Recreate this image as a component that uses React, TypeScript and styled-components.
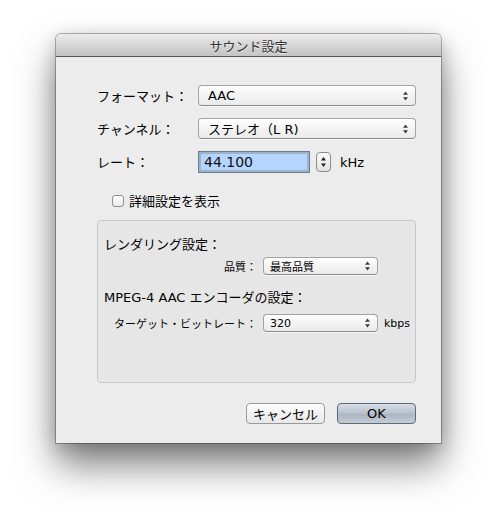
import React from "react"
import styled, { createGlobalStyle } from "styled-components"

const GlobalStyle = createGlobalStyle`
  html, body {
    margin: 0;
    padding: 0;
    background: #ffffff;
  }
  body {
    font-family: "DejaVu Sans", "Noto Sans CJK JP", sans-serif;
    color: #000;
  }
`

const Page = styled.div`
  width: 498px;
  height: 522px;
  padding: 34px 0 0 56px;
  box-sizing: border-box;
  overflow: hidden;
`

const Window = styled.div`
  width: 385px;
  height: 409px;
  background: #ececec;
  border-radius: 5px 5px 0 0;
  box-shadow: 0 0 0 1px rgba(0, 0, 0, 0.28), 0 22px 38px rgba(0, 0, 0, 0.5), 0 4px 18px rgba(0, 0, 0, 0.18);
  display: flex;
  flex-direction: column;
`

const TitleBar = styled.div`
  height: 22px;
  border-radius: 5px 5px 0 0;
  background: linear-gradient(#ececec, #d2d2d2 60%, #c4c4c4);
  border-bottom: 1px solid #575757;
  display: flex;
  align-items: center;
  justify-content: center;
  font-family: "Noto Sans CJK JP", sans-serif;
  font-size: 13px;
  color: #333;
  text-shadow: 0 1px 0 rgba(255, 255, 255, 0.6);
`

const Body = styled.div`
  flex: 1;
  padding: 28px 25px 19px 41px;
  display: flex;
  flex-direction: column;
`

const FormGrid = styled.div`
  display: grid;
  grid-template-columns: 101px 218px;
  grid-template-rows: 21px 21px 22px;
  row-gap: 12px;
  align-items: center;
`

const Label = styled.span<{ $size?: number }>`
  font-family: "Noto Sans CJK JP", sans-serif;
  font-size: ${(p) => p.$size ?? 13}px;
  line-height: 16px;
  white-space: nowrap;
`

const Popup = styled.div<{ $small?: boolean }>`
  position: relative;
  box-sizing: border-box;
  height: ${(p) => (p.$small ? 18 : 21)}px;
  width: 100%;
  padding-left: ${(p) => (p.$small ? 6 : 9)}px;
  border: 1px solid #a3a3a3;
  border-bottom-color: #8a8a8a;
  border-radius: 4px;
  background: linear-gradient(#ffffff, #f3f3f3 50%, #ebebeb);
  box-shadow: 0 1px 0 rgba(255, 255, 255, 0.7);
  display: flex;
  align-items: center;
  font-family: "DejaVu Sans", "Noto Sans CJK JP", sans-serif;
  font-size: ${(p) => (p.$small ? 11 : 13)}px;
`

const Arrows = styled.svg`
  position: absolute;
  right: 6px;
  top: 50%;
  transform: translateY(-50%);
`

function UpDown() {
  return (
    <Arrows width="7" height="10" viewBox="0 0 7 10">
      <path d="M3.5 0.5 L6 3.8 L1 3.8 Z" fill="#3c3c3c" />
      <path d="M3.5 9.5 L6 6.2 L1 6.2 Z" fill="#3c3c3c" />
    </Arrows>
  )
}

const RateRow = styled.div`
  display: flex;
  align-items: center;
  gap: 6px;
`

const RateField = styled.div`
  box-sizing: border-box;
  width: 112px;
  height: 22px;
  border: 1px solid #6c7d92;
  box-shadow: inset 0 0 0 2px #9cb3cc;
  background: #b5d5fe;
  padding: 0 5px;
  display: flex;
  align-items: center;
  font-family: "DejaVu Sans", sans-serif;
  font-size: 14px;
  color: #111;
`

const Stepper = styled.div`
  box-sizing: border-box;
  width: 15px;
  height: 20px;
  border: 1px solid #8c8c8c;
  border-radius: 4px;
  background: linear-gradient(#fdfdfd, #e2e2e2);
  display: flex;
  align-items: center;
  justify-content: center;
`

const Unit = styled.span<{ $size?: number; $gap?: number }>`
  font-family: "DejaVu Sans", sans-serif;
  font-size: ${(p) => p.$size ?? 13}px;
  margin-left: ${(p) => p.$gap ?? 3}px;
`

const CheckRow = styled.label`
  margin: 20px 0 0 15px;
  height: 16px;
  display: flex;
  align-items: center;
  gap: 5px;
`

const CheckBox = styled.span`
  box-sizing: border-box;
  width: 12px;
  height: 12px;
  border: 1px solid #8e8e8e;
  border-radius: 3px;
  background: linear-gradient(#ffffff, #ebebeb);
`

const Group = styled.div`
  margin-top: 11px;
  height: 163px;
  box-sizing: border-box;
  border: 1px solid #c9c9c9;
  border-radius: 4px;
  background: #e6e6e6;
  padding: 13px 0 0 6px;
  display: flex;
  flex-direction: column;
`

const GroupTitle = styled.div<{ $top?: number }>`
  margin-top: ${(p) => p.$top ?? 0}px;
  font-family: "DejaVu Sans", "Noto Sans CJK JP", sans-serif;
  font-size: 13px;
  height: 18px;
  display: flex;
  align-items: center;
`

const SmallRow = styled.div<{ $top: number }>`
  margin-top: ${(p) => p.$top}px;
  display: grid;
  grid-template-columns: 153px 115px auto;
  column-gap: 6px;
  align-items: center;
`

const SmallLabel = styled.span`
  text-align: right;
  font-family: "Noto Sans CJK JP", sans-serif;
  font-size: 11px;
`

const ButtonBar = styled.div`
  margin-top: auto;
  display: flex;
  justify-content: flex-end;
  gap: 12px;
`

const Button = styled.button<{ $primary?: boolean }>`
  box-sizing: border-box;
  width: 79px;
  height: 21px;
  padding: 0;
  border: 1px solid ${(p) => (p.$primary ? "#5b6a80" : "#9a9a9a")};
  border-radius: 4px;
  background: ${(p) =>
    p.$primary
      ? "linear-gradient(#d7dde6, #b7c0cc 50%, #a9b3c0 51%, #c5ccd6)"
      : "linear-gradient(#ffffff, #f2f2f2 50%, #e8e8e8)"};
  font-family: "DejaVu Sans", "Noto Sans CJK JP", sans-serif;
  font-size: 13px;
  color: #000;
`

export default function App() {
  return (
    <>
      <GlobalStyle />
      <Page>
        <Window>
          <TitleBar>サウンド設定</TitleBar>
          <Body>
            <FormGrid>
              <Label>フォーマット：</Label>
              <Popup>
                AAC
                <UpDown />
              </Popup>
              <Label>チャンネル：</Label>
              <Popup>
                ステレオ（L R)
                <UpDown />
              </Popup>
              <Label>レート：</Label>
              <RateRow>
                <RateField>44.100</RateField>
                <Stepper>
                  <svg width="7" height="12" viewBox="0 0 7 12">
                    <path d="M3.5 1 L6 4.5 L1 4.5 Z" fill="#222" />
                    <path d="M3.5 11 L6 7.5 L1 7.5 Z" fill="#222" />
                  </svg>
                </Stepper>
                <Unit>kHz</Unit>
              </RateRow>
            </FormGrid>

            <CheckRow>
              <CheckBox />
              <Label>詳細設定を表示</Label>
            </CheckRow>

            <Group>
              <GroupTitle>レンダリング設定：</GroupTitle>
              <SmallRow $top={5}>
                <SmallLabel>品質：</SmallLabel>
                <Popup $small>
                  最高品質
                  <UpDown />
                </Popup>
              </SmallRow>
              <GroupTitle $top={12}>MPEG-4 AAC エンコーダの設定：</GroupTitle>
              <SmallRow $top={9}>
                <SmallLabel>ターゲット・ビットレート：</SmallLabel>
                <Popup $small>
                  320
                  <UpDown />
                </Popup>
                <Unit $size={11} $gap={0}>
                  kbps
                </Unit>
              </SmallRow>
            </Group>

            <ButtonBar>
              <Button>キャンセル</Button>
              <Button $primary>OK</Button>
            </ButtonBar>
          </Body>
        </Window>
      </Page>
    </>
  )
}
